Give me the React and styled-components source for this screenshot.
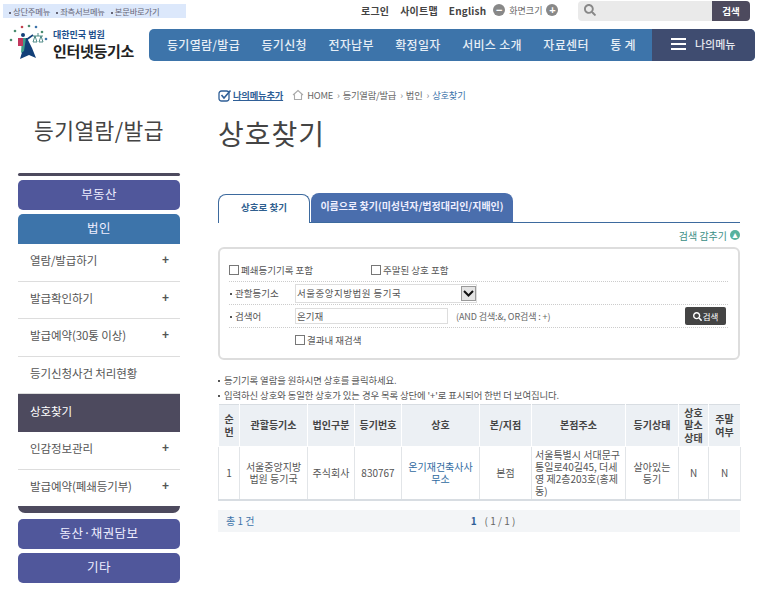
import React from 'react'
import styled, { createGlobalStyle } from 'styled-components'
import { FaSearch } from 'react-icons/fa'

const GlobalStyle = createGlobalStyle`
  html, body {
    margin: 0;
    padding: 0;
    background: #fff;
    font-family: "Noto Sans CJK KR", "Noto Sans", sans-serif;
    color: #555;
  }
  * { box-sizing: border-box; }
`

const Logo = () => (
  <svg width="44" height="42" viewBox="0 0 44 42">
    <circle cx="3" cy="17" r="1.3" fill="#4a8c6f" />
    <circle cx="7" cy="8" r="1.3" fill="#4a8c6f" />
    <circle cx="14" cy="4" r="1.3" fill="#c2424f" />
    <circle cx="21" cy="3" r="1.3" fill="#4a8c6f" />
    <circle cx="28" cy="4" r="1.3" fill="#3d74aa" />
    <circle cx="34" cy="9" r="1.3" fill="#4a8c6f" />
    <circle cx="38" cy="16" r="1.3" fill="#3d74aa" />
    <circle cx="15" cy="12" r="2" fill="#123f78" />
    <path d="M13 15 L19 15 L24 25 L28 35 L21 32 L12 36 L15 26 Z" fill="#123f78" />
    <path d="M14 15 L18 15 L16 28 L13 30 Z" fill="#3f9c8a" />
    <rect x="10" y="15" width="5" height="8" fill="#c2385e" />
    <path d="M18 17 L25 12" stroke="#123f78" strokeWidth="1.6" />
    <path d="M25 13 L35 13 M27 13 L25 19 L29 19 Z M33 13 L31 19 L35 19 Z M30 10 V13" stroke="#3d7f7a" strokeWidth="0.9" fill="none" />
  </svg>
)

const SideItem = ({ label, plus, active }) => (
  <MenuRow $active={active}>
    {label}
    {plus && <Plus>+</Plus>}
  </MenuRow>
)

const App = () => {
  const sideItems = [
    { label: '열람/발급하기', plus: true },
    { label: '발급확인하기', plus: true },
    { label: '발급예약(30통 이상)', plus: true },
    { label: '등기신청사건 처리현황' },
    { label: '상호찾기', active: true },
    { label: '인감정보관리', plus: true },
    { label: '발급예약(폐쇄등기부)', plus: true },
  ]

  return (
    <Page>
      <GlobalStyle />
      <TopRow>
        <SkipBar>
          <span>상단주메뉴</span>
          <span>좌측서브메뉴</span>
          <span>본문바로가기</span>
        </SkipBar>
        <TopLinks>
          <TopLink>로그인</TopLink>
          <TopLink>사이트맵</TopLink>
          <TopLink>English</TopLink>
          <ZoomBox>
            <RoundBtn>−</RoundBtn>
            화면크기
            <RoundBtn>+</RoundBtn>
          </ZoomBox>
        </TopLinks>
        <SearchBar>
          <SearchField><FaSearch size={12} color="#888" /></SearchField>
          <SearchBtn>검색</SearchBtn>
        </SearchBar>
      </TopRow>

      <NavRow>
        <LogoBox>
          <Logo />
          <LogoText>
            <small>대한민국 법원</small>
            <strong>인터넷등기소</strong>
          </LogoText>
        </LogoBox>
        <Nav>
          <NavItems>
            <span>등기열람/발급</span>
            <span>등기신청</span>
            <span>전자납부</span>
            <span>확정일자</span>
            <span>서비스 소개</span>
            <span>자료센터</span>
            <span>통 계</span>
          </NavItems>
          <MyMenu>
            <Burger><i /><i /><i /></Burger>
            나의메뉴
          </MyMenu>
        </Nav>
      </NavRow>

      <Main>
        <Side>
          <SideTitle>등기열람/발급</SideTitle>
          <SideRule />
          <SideBtn>부동산</SideBtn>
          <SideHead>법인</SideHead>
          {sideItems.map((item) => (
            <SideItem key={item.label} {...item} />
          ))}
          <SideCap />
          <SideBtn>동산·채권담보</SideBtn>
          <SideBtn>기타</SideBtn>
        </Side>

        <Content>
          <Crumbs>
            <svg width="14" height="13" viewBox="0 0 14 13">
              <rect x="1" y="2" width="10" height="10" rx="2.5" fill="none" stroke="#2f5f97" strokeWidth="1.3" />
              <path d="M3.5 6 L6 9 L12.5 1.5" fill="none" stroke="#2f5f97" strokeWidth="1.6" />
            </svg>
            <MyAdd>나의메뉴추가</MyAdd>
            <HomeIcon viewBox="0 0 12 12">
              <path d="M1 6 L6 1.5 L11 6 M2.5 5.5 V10.5 H9.5 V5.5" fill="none" stroke="#aaa" strokeWidth="1.1" />
            </HomeIcon>
            <Crumb>HOME</Crumb>
            <Crumb>등기열람/발급</Crumb>
            <Crumb>법인</Crumb>
            <CrumbNow>상호찾기</CrumbNow>
          </Crumbs>
          <PageTitle>상호찾기</PageTitle>

          <Tabs>
            <Tab $on>상호로 찾기</Tab>
            <Tab>이름으로 찾기(미성년자/법정대리인/지배인)</Tab>
          </Tabs>
          <HideRow>
            검색 감추기
            <HideDot>▴</HideDot>
          </HideRow>

          <SearchCard>
            <CheckRow>
              <CheckLabel $w="142px"><Box />폐쇄등기기록 포함</CheckLabel>
              <CheckLabel><Box />주말된 상호 포함</CheckLabel>
            </CheckRow>
            <FormRow>
              <FieldName>관할등기소</FieldName>
              <SelectBox>
                서울중앙지방법원 등기국
                <SelectArrow>
                  <svg width="11" height="7" viewBox="0 0 11 7">
                    <path d="M1 1 L5.5 5.5 L10 1" fill="none" stroke="#111" strokeWidth="2" />
                  </svg>
                </SelectArrow>
              </SelectBox>
            </FormRow>
            <FormRow>
              <FieldName>검색어</FieldName>
              <TextBox>온기재</TextBox>
              <Hint>(AND 검색:&amp;, OR검색 : +)</Hint>
              <GoBtn><FaSearch size={9} />검색</GoBtn>
            </FormRow>
            <ResearchRow>
              <CheckLabel><Box />결과내 재검색</CheckLabel>
            </ResearchRow>
          </SearchCard>

          <Notes>
            <li>등기기록 열람을 원하시면 상호를 클릭하세요.</li>
            <li>입력하신 상호와 동일한 상호가 있는 경우 목록 상단에 '+'로 표시되어 한번 더 보여집니다.</li>
          </Notes>

          <Table>
            <colgroup>
              <col width="21" /><col width="68" /><col width="47" /><col width="47" /><col width="78" />
              <col width="52" /><col width="94" /><col width="53" /><col width="30" /><col width="32" />
            </colgroup>
            <thead>
              <tr>
                <th>순<br />번</th><th>관할등기소</th><th>법인구분</th><th>등기번호</th><th>상호</th>
                <th>본/지점</th><th>본점주소</th><th>등기상태</th><th>상호<br />말소<br />상태</th><th>주말<br />여부</th>
              </tr>
            </thead>
            <tbody>
              <tr>
                <td>1</td>
                <td>서울중앙지방<br />법원 등기국</td>
                <td>주식회사</td>
                <td>830767</td>
                <td><CompanyLink>온기재건축사사<br />무소</CompanyLink></td>
                <td>본점</td>
                <AddrCell>서울특별시 서대문구<br />통일로40길45, 더세<br />영 제2층203호(홍제<br />동)</AddrCell>
                <td>살아있는<br />등기</td>
                <td>N</td>
                <td>N</td>
              </tr>
            </tbody>
          </Table>

          <Pager>
            <Total>총 1 건</Total>
            <PageNo><b>1</b>( 1 / 1 )</PageNo>
          </Pager>
        </Content>
      </Main>
    </Page>
  )
}

const Page = styled.div`
  width: 773px;
  height: 594px;
  overflow: hidden;
  font-size: 9px;
`

const TopRow = styled.div`
  display: flex;
  align-items: flex-start;
  height: 29px;
  padding: 1px 23px 0 3px;
`

const SkipBar = styled.div`
  width: 183px;
  height: 14px;
  margin-top: 3px;
  background: #dce8fb;
  display: flex;
  gap: 6px;
  align-items: center;
  padding-left: 6px;
  font-size: 8.3px;
  color: #667;
  letter-spacing: -0.2px;
  white-space: nowrap;
  span::before {
    content: '';
    display: inline-block;
    width: 2px;
    height: 2px;
    background: #667;
    margin-right: 2px;
    vertical-align: middle;
  }
`

const TopLinks = styled.div`
  display: flex;
  align-items: center;
  height: 18px;
  margin-left: 175px;
  gap: 11px;
`

const TopLink = styled.span`
  font-size: 10px;
  font-weight: 700;
  color: #444;
  letter-spacing: 0.2px;
  white-space: nowrap;
`

const ZoomBox = styled.span`
  display: flex;
  align-items: center;
  gap: 4px;
  margin-left: -4px;
  font-size: 9px;
  color: #666;
  white-space: nowrap;
`

const RoundBtn = styled.i`
  width: 12px;
  height: 12px;
  border-radius: 50%;
  background: #888;
  color: #fff;
  font: 700 11px/12px "Liberation Sans", sans-serif;
  text-align: center;
`

const SearchBar = styled.div`
  display: flex;
  width: 172px;
  height: 20px;
  margin-left: auto;
`

const SearchField = styled.div`
  flex: 1;
  background: #eaeaea;
  border-radius: 4px 0 0 4px;
  padding: 3px 0 0 6px;
`

const SearchBtn = styled.div`
  width: 38px;
  background: #4d4a5e;
  color: #fff;
  border-radius: 0 4px 4px 0;
  font-size: 9.5px;
  font-weight: 700;
  text-align: center;
  line-height: 20px;
`

const NavRow = styled.div`
  display: flex;
  height: 32px;
`

const LogoBox = styled.div`
  width: 149px;
  display: flex;
  padding-left: 8px;
  gap: 1px;
  margin-top: -6px;
  height: 42px;
`

const LogoText = styled.div`
  display: flex;
  flex-direction: column;
  padding-top: 5px;
  small {
    font-size: 9px;
    font-weight: 700;
    color: #1d4f8c;
    line-height: 13px;
  }
  strong {
    font-size: 15px;
    line-height: 19px;
    color: #222;
    white-space: nowrap;
    letter-spacing: -0.3px;
  }
`

const Nav = styled.div`
  width: 606px;
  height: 32px;
  display: flex;
  background: #3d74aa;
  border-radius: 5px;
  overflow: hidden;
`

const NavItems = styled.div`
  width: 503px;
  display: flex;
  justify-content: space-between;
  align-items: center;
  padding: 0 16px 2px 18px;
  color: #e6eef6;
  font-size: 12px;
  font-weight: 500;
  letter-spacing: 0.3px;
  white-space: nowrap;
`

const MyMenu = styled.div`
  flex: 1;
  background: #3f4c70;
  color: #e6e8ef;
  display: flex;
  align-items: center;
  gap: 9px;
  padding: 0 0 2px 19px;
  font-size: 11px;
  font-weight: 500;
  white-space: nowrap;
`

const Burger = styled.div`
  display: flex;
  flex-direction: column;
  gap: 3px;
  i {
    display: block;
    width: 15px;
    height: 2px;
    background: #fff;
  }
`

const Main = styled.div`
  display: grid;
  grid-template-columns: 162px 522px;
  column-gap: 38px;
  padding-left: 18px;
`

const Side = styled.aside`
  padding-top: 54px;
`

const SideTitle = styled.div`
  height: 58px;
  text-align: center;
  font-size: 21.5px;
  line-height: 30px;
  color: #444;
  letter-spacing: 0.4px;
  white-space: nowrap;
`

const SideRule = styled.div`
  height: 3px;
  background: #4d4a5e;
  border-radius: 2px;
  margin-bottom: 4px;
`

const SideBtn = styled.div`
  height: 30px;
  margin-bottom: 4px;
  background: #50579b;
  border-radius: 5px;
  color: #eef;
  text-align: center;
  font-size: 12.5px;
  line-height: 28px;
  letter-spacing: 0.4px;
`

const SideHead = styled(SideBtn)`
  margin: 0;
  background: #3d74aa;
  border-radius: 5px 5px 0 0;
`

const MenuRow = styled.div`
  height: 37.6px;
  display: flex;
  align-items: center;
  justify-content: space-between;
  padding: 0 11px 4px 12px;
  font-size: 11.5px;
  white-space: nowrap;
  letter-spacing: -0.1px;
  color: ${(p) => (p.$active ? '#fff' : '#555')};
  background: ${(p) => (p.$active ? '#4d4a5e' : '#fff')};
  border-bottom: 1px solid ${(p) => (p.$active ? '#4d4a5e' : '#ddd')};
`

const Plus = styled.span`
  font: 700 12px/12px "Liberation Sans", sans-serif;
  color: #555;
`

const SideCap = styled.div`
  height: 7px;
  margin-top: -1px;
  margin-bottom: 6px;
  background: #4d4a5e;
  border-radius: 0 0 7px 7px;
`

const Content = styled.main`
  min-width: 0;
`

const Crumbs = styled.div`
  height: 14px;
  margin-top: 27px;
  display: flex;
  align-items: center;
  font-size: 9.3px;
  color: #666;
  letter-spacing: -0.2px;
  white-space: nowrap;
`

const MyAdd = styled.span`
  margin: 0 9px 0 1px;
  color: #2f5f97;
  font-weight: 700;
  text-decoration: underline;
`

const HomeIcon = styled.svg`
  width: 12px;
  height: 12px;
  margin-right: 3px;
`

const Crumb = styled.span`
  margin-right: 3px;
  &::after {
    content: '›';
    margin-left: 4px;
    color: #888;
  }
`

const CrumbNow = styled.span`
  color: #3d74aa;
`

const PageTitle = styled.h1`
  margin: 12px 0 0;
  height: 80px;
  font-size: 28px;
  line-height: 38px;
  font-weight: 400;
  color: #444;
  letter-spacing: 1px;
  white-space: nowrap;
`

const Tabs = styled.div`
  display: flex;
  height: 29px;
  align-items: flex-end;
  border-bottom: 1px solid #3d6a9e;
`

const Tab = styled.div`
  height: 29px;
  width: ${(p) => (p.$on ? '92px' : '202px')};
  margin-right: 1px;
  margin-bottom: ${(p) => (p.$on ? '-1px' : '0')};
  border: ${(p) => (p.$on ? '1px solid #3d6a9e' : '0')};
  border-bottom: 0;
  border-radius: 8px 8px 0 0;
  background: ${(p) => (p.$on ? '#fff' : '#4a6ead')};
  color: ${(p) => (p.$on ? '#2f5f8f' : '#eef')};
  font-size: ${(p) => (p.$on ? '9.5px' : '10px')};
  font-weight: 700;
  line-height: 25px;
  text-align: center;
  white-space: nowrap;
`

const HideRow = styled.div`
  height: 24px;
  display: flex;
  justify-content: flex-end;
  align-items: center;
  gap: 3px;
  font-size: 10px;
  color: #3b8f86;
`

const HideDot = styled.i`
  width: 10px;
  height: 10px;
  border-radius: 50%;
  background: #57b29e;
  color: #fff;
  font: 10px/9px "DejaVu Sans", sans-serif;
  text-align: center;
`

const SearchCard = styled.section`
  height: 113px;
  border: 2px solid #ddd;
  border-radius: 6px;
  padding: 9px 10px 0 9px;
  font-size: 9.5px;
`

const CheckRow = styled.div`
  height: 24px;
  display: flex;
  align-items: center;
  border-bottom: 1px dotted #ccc;
`

const CheckLabel = styled.label`
  display: flex;
  align-items: center;
  gap: 2px;
  width: ${(p) => p.$w || 'auto'};
  color: #555;
  white-space: nowrap;
`

const Box = styled.i`
  width: 10px;
  height: 10px;
  background: #fff;
  border: 1px solid #777;
`

const FormRow = styled.div`
  height: 23px;
  display: flex;
  align-items: center;
  border-bottom: 1px dotted #ccc;
`

const FieldName = styled.div`
  width: 66px;
  padding-left: 1px;
  color: #555;
  &::before {
    content: '';
    display: inline-block;
    width: 2px;
    height: 2px;
    background: #555;
    margin-right: 3px;
    vertical-align: middle;
  }
`

const SelectBox = styled.div`
  width: 182px;
  height: 19px;
  padding-left: 1px;
  border: 1px solid #ddd;
  display: flex;
  align-items: center;
  justify-content: space-between;
  color: #555;
  letter-spacing: 0.5px;
`

const SelectArrow = styled.div`
  width: 15px;
  height: 15px;
  border: 1px solid #999;
  background: #e4e4e4;
  display: flex;
  align-items: center;
  justify-content: center;
`

const TextBox = styled.div`
  width: 153px;
  height: 16px;
  line-height: 14px;
  padding-left: 1px;
  border: 1px solid #ddd;
  color: #555;
`

const Hint = styled.div`
  margin-left: 8px;
  font-size: 9px;
  color: #666;
  letter-spacing: -0.1px;
  white-space: nowrap;
`

const GoBtn = styled.div`
  margin-left: auto;
  margin-right: 2px;
  width: 41px;
  height: 18px;
  background: #444;
  border-radius: 2px;
  color: #fff;
  display: flex;
  align-items: center;
  justify-content: center;
  gap: 1px;
  font-size: 8.5px;
`

const ResearchRow = styled.div`
  height: 23px;
  padding-left: 66px;
  display: flex;
  align-items: center;
`

const Notes = styled.ul`
  list-style: none;
  margin: 0;
  padding: 13px 0 0;
  height: 44px;
  font-size: 9.4px;
  color: #555;
  letter-spacing: -0.1px;
  li {
    line-height: 15px;
    white-space: nowrap;
  }
  li::before {
    content: '';
    display: inline-block;
    width: 2px;
    height: 2px;
    background: #555;
    margin: 0 4px 0 0;
    vertical-align: middle;
  }
`

const Table = styled.table`
  width: 522px;
  table-layout: fixed;
  border-collapse: collapse;
  border-top: 1px solid #d8dde2;
  border-bottom: 2px solid #d8dde2;
  font-size: 10px;
  th {
    height: 42px;
    padding: 0;
    background: #ecf0f4;
    border: 1px solid #fff;
    border-top: 0;
    color: #444;
    font-weight: 700;
    line-height: 12.5px;
    text-align: center;
    white-space: nowrap;
  }
  td {
    height: 53px;
    padding: 0 2px;
    border-left: 1px solid #e2e5e8;
    border-right: 1px solid #e2e5e8;
    color: #555;
    line-height: 12px;
    text-align: center;
    white-space: nowrap;
  }
`

const CompanyLink = styled.span`
  color: #2f6a9f;
`

const AddrCell = styled.td`
  && {
    text-align: left;
    padding: 0 3px;
  }
`

const Pager = styled.div`
  margin-top: 9px;
  height: 22px;
  display: grid;
  grid-template-columns: 1fr 1fr 1fr;
  align-items: center;
  background: #f3f5f7;
  padding-left: 8px;
  font-size: 10px;
`

const Total = styled.span`
  color: #3d74aa;
`

const PageNo = styled.span`
  padding-left: 20px;
  text-align: center;
  color: #666;
  white-space: nowrap;
  b {
    color: #2f5f97;
    margin-right: 8px;
  }
`

export default App
